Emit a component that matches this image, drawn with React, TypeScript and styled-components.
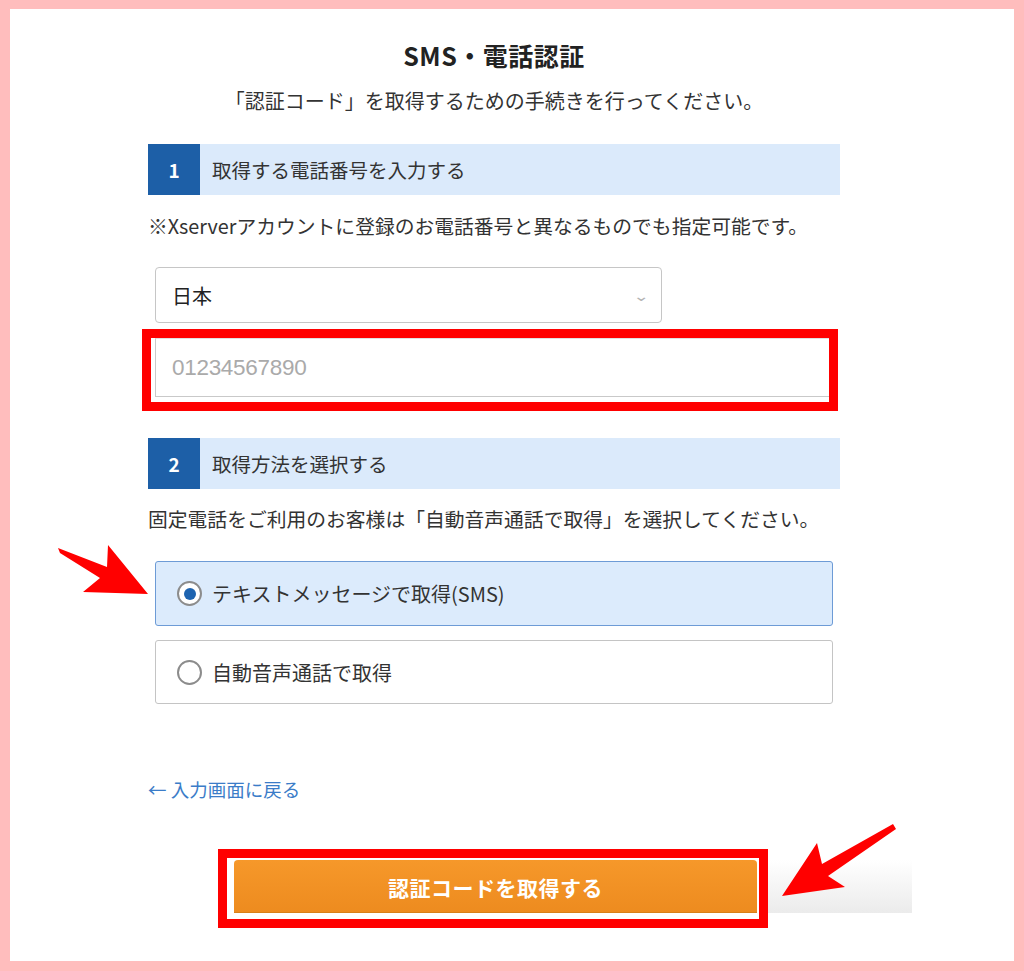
import React from 'react'
import styled, { createGlobalStyle } from 'styled-components'

const GlobalStyle = createGlobalStyle`
  html, body {
    margin: 0;
    padding: 0;
    background: #ffbdbd;
  }
  body {
    font-family: "Noto Sans CJK JP", "Noto Sans", sans-serif;
    color: #333;
  }
`

const Frame = styled.div`
  width: 1024px;
  height: 971px;
  box-sizing: border-box;
  padding: 9px 10px 10px 10px;
  background: #ffbdbd;
`

const Sheet = styled.div`
  position: relative;
  height: 100%;
  background: #fff;
  overflow: hidden;
`

const Column = styled.div`
  display: flex;
  flex-direction: column;
  margin-left: 138px;
  width: 692px;
`

const Title = styled.h1`
  margin: 31px 0 0;
  font-size: 25px;
  line-height: 30px;
  font-weight: 700;
  color: #222;
  text-align: center;
  letter-spacing: 0.5px;
`

const Lead = styled.p`
  margin: 17px 0 0;
  font-size: 20px;
  line-height: 28px;
  text-align: center;
  color: #333;
`

const StepBar = styled.div<{ $top: number }>`
  display: flex;
  align-items: center;
  height: 51px;
  margin-top: ${(p) => p.$top}px;
  background: #dbeafb;
`

const StepNum = styled.div`
  display: flex;
  align-items: center;
  justify-content: center;
  width: 52px;
  height: 100%;
  background: #1d5fa7;
  color: #fff;
  font-weight: 700;
  font-size: 19px;
`

const StepLabel = styled.span`
  margin-left: 12px;
  font-size: 19.5px;
  color: #333;
`

const Note = styled.p<{ $top: number }>`
  margin: ${(p) => p.$top}px 0 0;
  font-size: 19.8px;
  line-height: 28px;
  color: #333;
  white-space: nowrap;
`

const Select = styled.div`
  display: flex;
  align-items: center;
  justify-content: space-between;
  box-sizing: border-box;
  margin: 27px 0 0 7px;
  width: 507px;
  height: 56px;
  padding: 0 14px 0 16px;
  border: 1px solid #c6c6c6;
  border-radius: 4px;
  font-size: 20px;
  color: #222;
`

const Chevron = styled.span`
  color: #b5b5b5;
  font-size: 14px;
  transform: scaleX(1.4);
`

const Highlight = styled.div`
  box-sizing: border-box;
  margin: 6px 0 0 -6px;
  width: 696px;
  height: 82px;
  border: 9px solid #ff0000;
  overflow: hidden;
  background: #fff;
`

const PhoneInput = styled.div`
  box-sizing: border-box;
  margin-left: 4px;
  width: 700px;
  height: 59px;
  display: flex;
  align-items: center;
  padding-left: 16px;
  border: 1px solid #c9c9c9;
  border-top-color: #e0e0e0;
  font-family: "Liberation Sans", Arial, sans-serif;
  font-size: 22.5px;
  color: #aaa;
  letter-spacing: -0.3px;
`

const Option = styled.div<{ $selected?: boolean; $top: number; $h: number }>`
  display: flex;
  align-items: center;
  box-sizing: border-box;
  margin: ${(p) => p.$top}px 0 0 7px;
  width: 678px;
  height: ${(p) => p.$h}px;
  padding-left: 21px;
  border: 1px solid ${(p) => (p.$selected ? '#6d9bd6' : '#c4c4c4')};
  border-radius: 3px;
  background: ${(p) => (p.$selected ? '#dcebfc' : '#fff')};
  font-size: 20px;
  color: #333;
`

const Radio = styled.span<{ $checked?: boolean }>`
  position: relative;
  box-sizing: border-box;
  width: 25px;
  height: 25px;
  margin-right: 10px;
  border-radius: 50%;
  border: 2px solid #8c8c8c;
  background: #fff;

  &::after {
    content: '';
    display: ${(p) => (p.$checked ? 'block' : 'none')};
    position: absolute;
    left: 4.5px;
    top: 4.5px;
    width: 12px;
    height: 12px;
    border-radius: 50%;
    background: #1d63b0;
  }
`

const BackLink = styled.a`
  margin-top: 72px;
  font-size: 18.5px;
  line-height: 26px;
  color: #3b7cc8;
  text-decoration: none;
`

const ButtonRow = styled.div`
  display: flex;
  align-items: flex-start;
  margin: 47px 0 0 70px;
`

const ButtonFrame = styled.div`
  flex-shrink: 0;
  box-sizing: border-box;
  width: 550px;
  height: 79px;
  padding: 2px 0 0 7px;
  border: 9px solid #ff0000;
  background: #fff;
`

const SubmitButton = styled.button`
  width: 523px;
  height: 53px;
  border: none;
  border-radius: 4px 4px 0 0;
  background: linear-gradient(#f6982a, #ed8b1f);
  color: #fff;
  font-family: inherit;
  font-weight: 700;
  font-size: 21px;
  letter-spacing: 0.5px;
  box-shadow: inset 0 -1px 0 #d98018;
`

const Fade = styled.div`
  flex-shrink: 0;
  margin-top: 11px;
  width: 144px;
  height: 53px;
  background: linear-gradient(#ffffff, #ebebeb);
`

const Overlay = styled.svg`
  position: absolute;
  left: 0;
  top: 0;
  pointer-events: none;
`

export default function App() {
  return (
    <Frame>
      <GlobalStyle />
      <Sheet>
        <Column>
          <Title>SMS・電話認証</Title>
          <Lead>「認証コード」を取得するための手続きを行ってください。</Lead>

          <StepBar $top={29}>
            <StepNum>1</StepNum>
            <StepLabel>取得する電話番号を入力する</StepLabel>
          </StepBar>
          <Note $top={17}>
            ※Xserverアカウントに登録のお電話番号と異なるものでも指定可能です。
          </Note>

          <Select>
            日本
            <Chevron>⌄</Chevron>
          </Select>
          <Highlight>
            <PhoneInput>01234567890</PhoneInput>
          </Highlight>

          <StepBar $top={27}>
            <StepNum>2</StepNum>
            <StepLabel>取得方法を選択する</StepLabel>
          </StepBar>
          <Note $top={16}>
            固定電話をご利用のお客様は「自動音声通話で取得」を選択してください。
          </Note>

          <Option $selected $top={28} $h={65}>
            <Radio $checked />
            テキストメッセージで取得(SMS)
          </Option>
          <Option $top={14} $h={64}>
            <Radio />
            自動音声通話で取得
          </Option>

          <BackLink href="#">← 入力画面に戻る</BackLink>

          <ButtonRow>
            <ButtonFrame>
              <SubmitButton>認証コードを取得する</SubmitButton>
            </ButtonFrame>
            <Fade />
          </ButtonRow>
        </Column>

        <Overlay width="1004" height="952" viewBox="10 9 1004 952">
          <polygon
            fill="#ff0000"
            points="58,548 107,567 108,545 148,594 83,592 100,578 60,553"
          />
          <polygon
            fill="#ff0000"
            points="893,824 822,864 817,843 782,896 845,887 828,876 896,829"
          />
        </Overlay>
      </Sheet>
    </Frame>
  )
}
